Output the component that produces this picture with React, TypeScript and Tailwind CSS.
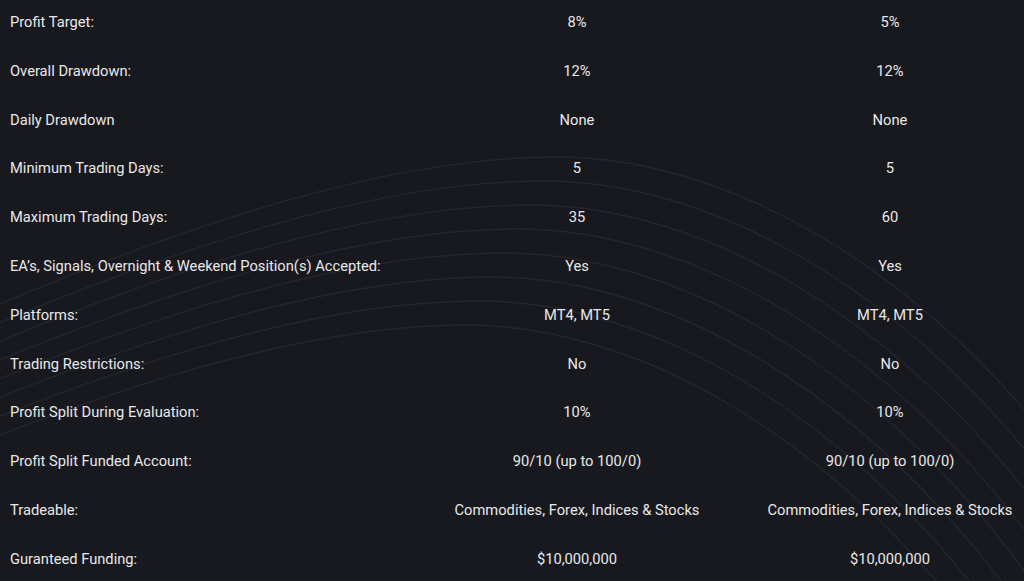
import React from 'react';

type Row = { label: string; a: string; b: string };

const rows: Row[] = [
    { label: 'Profit Target:', a: '8%', b: '5%' },
    { label: 'Overall Drawdown:', a: '12%', b: '12%' },
    { label: 'Daily Drawdown', a: 'None', b: 'None' },
    { label: 'Minimum Trading Days:', a: '5', b: '5' },
    { label: 'Maximum Trading Days:', a: '35', b: '60' },
    { label: 'EA’s, Signals, Overnight & Weekend Position(s) Accepted:', a: 'Yes', b: 'Yes' },
    { label: 'Platforms:', a: 'MT4, MT5', b: 'MT4, MT5' },
    { label: 'Trading Restrictions:', a: 'No', b: 'No' },
    { label: 'Profit Split During Evaluation:', a: '10%', b: '10%' },
    { label: 'Profit Split Funded Account:', a: '90/10 (up to 100/0)', b: '90/10 (up to 100/0)' },
    { label: 'Tradeable:', a: 'Commodities, Forex, Indices & Stocks', b: 'Commodities, Forex, Indices & Stocks' },
    { label: 'Guranteed Funding:', a: '$10,000,000', b: '$10,000,000' },
];

function Waves() {
    const lines = [0, 1, 2, 3, 4, 5, 6, 7];
    return (
        <svg
            className="absolute inset-0 pointer-events-none"
            width="1024"
            height="581"
            viewBox="0 0 1024 581"
            fill="none"
        >
            {lines.map((i) => (
                <path
                    key={i}
                    transform={`translate(${-13 * i} ${24 * i})`}
                    d="M -60 330 C 200 215, 400 157, 557 157 C 720 157, 920 260, 1080 480"
                    stroke="#ffffff"
                    strokeOpacity={0.06}
                    strokeWidth={1.4}
                />
            ))}
        </svg>
    );
}

export default function App() {
    return (
        <div
            className="relative w-full h-[581px] overflow-hidden bg-[#18191f] text-[#e8e8e8] text-[14.7px]"
            style={{ fontFamily: 'Roboto, "Liberation Sans", sans-serif' }}
        >
            <Waves />
            <div className="relative flex flex-col gap-[4.8px] pl-[10px]">
                {rows.map((r) => (
                    <div
                        key={r.label}
                        className="grid grid-cols-[388px_268px_268px] gap-x-[45px] h-[44px] items-center"
                    >
                        <span className="whitespace-nowrap">{r.label}</span>
                        <span className="text-center whitespace-nowrap">{r.a}</span>
                        <span className="text-center whitespace-nowrap">{r.b}</span>
                    </div>
                ))}
            </div>
        </div>
    );
}
